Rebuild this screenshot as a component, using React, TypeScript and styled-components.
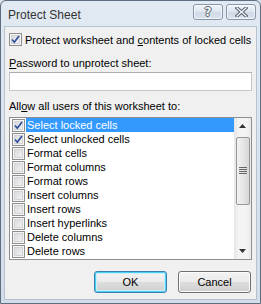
import styled, { createGlobalStyle } from "styled-components";

const GlobalStyle = createGlobalStyle`
  html, body {
    margin: 0;
    padding: 0;
    background: #d9e3ed;
  }
  body {
    font-family: "Liberation Sans", Arial, sans-serif;
    font-size: 11px;
    color: #000;
  }
`;

const Window = styled.div`
  width: 261px;
  height: 304px;
  box-sizing: border-box;
  border: 1px solid #5d6e80;
  border-radius: 6px 6px 0 0;
  background: linear-gradient(#e1e9f2, #d2dde9);
  display: flex;
  flex-direction: column;
  padding: 0 3px 3px 3px;
`;

const TitleBar = styled.div`
  height: 25px;
  display: flex;
  align-items: flex-start;
  justify-content: space-between;
`;

const Title = styled.div`
  margin: 7px 0 0 4px;
  font-size: 12px;
  color: #333;
`;

const TitleButtons = styled.div`
  display: flex;
  gap: 3px;
  margin: 3px 1px 0 0;
`;

const TitleButton = styled.div`
  width: 28px;
  height: 14px;
  border: 1px solid #8797aa;
  border-radius: 3px;
  background: linear-gradient(#f2f5f9, #dde5ee 50%, #d0dae5 51%, #dbe3ec);
  box-shadow: inset 0 0 0 1px rgba(255, 255, 255, 0.6);
  display: flex;
  align-items: center;
  justify-content: center;
`;

const HelpGlyph = styled.span`
  font-family: "DejaVu Sans", sans-serif;
  font-weight: bold;
  font-size: 12px;
  line-height: 14px;
  color: #f4f6f8;
  text-shadow: -1px 0 #55606c, 1px 0 #55606c, 0 -1px #55606c, 0 1px #55606c;
`;

const Client = styled.div`
  flex: 1;
  border: 1px solid #b4c2d1;
  background: #f0f0f0;
  padding: 0 4px;
  display: flex;
  flex-direction: column;
`;

const TopCheckRow = styled.div`
  display: flex;
  align-items: center;
  height: 13px;
  margin-top: 6px;
  gap: 3px;
  white-space: nowrap;
`;

const Label = styled.div<{ $top: number }>`
  margin-top: ${p => p.$top}px;
  line-height: 13px;
  height: 13px;
  white-space: nowrap;
`;

const U = styled.span`
  text-decoration: underline;
  text-underline-offset: 1px;
`;

const TextBox = styled.div`
  margin-top: 2px;
  height: 19px;
  box-sizing: border-box;
  border: 1px solid #c3c6cc;
  border-top-color: #abadb3;
  background: #fff;
`;

const ListBox = styled.div`
  margin-top: 4px;
  height: 143px;
  box-sizing: border-box;
  border: 1px solid #8c8f94;
  background: #fff;
  display: flex;
`;

const Rows = styled.div`
  flex: 1;
  padding-left: 2px;
  display: flex;
  flex-direction: column;
`;

const Row = styled.div`
  height: 14px;
  display: flex;
  align-items: center;
  white-space: nowrap;
`;

const RowText = styled.div<{ $selected?: boolean }>`
  flex: 1;
  height: 14px;
  line-height: 14px;
  margin-left: 1px;
  padding-left: 1px;
  background: ${p => (p.$selected ? "#3399ff" : "transparent")};
  color: ${p => (p.$selected ? "#fff" : "#000")};
`;

const Box = styled.span`
  width: 13px;
  height: 13px;
  box-sizing: border-box;
  flex: none;
  border: 1px solid #8e8f8f;
  background: linear-gradient(135deg, #d3d5d8, #f7f7f7);
  box-shadow: inset 0 0 0 1px #f4f4f4, inset 0 0 0 2px #d2d3d6;
  display: flex;
  align-items: center;
  justify-content: center;
`;

const ScrollBar = styled.div`
  width: 17px;
  background: linear-gradient(90deg, #e6e6e6, #f4f4f4 30%, #f4f4f4 70%, #e9e9e9);
  display: flex;
  flex-direction: column;
  align-items: center;
`;

const Arrow = styled.div`
  height: 16px;
  width: 17px;
  display: flex;
  align-items: center;
  justify-content: center;
`;

const Thumb = styled.div`
  margin-top: 3px;
  width: 14px;
  height: 68px;
  box-sizing: border-box;
  border: 1px solid #979797;
  border-radius: 2px;
  background: linear-gradient(90deg, #f2f2f2, #e6e6e6 50%, #d6d6d6);
  display: flex;
  align-items: center;
  justify-content: center;
`;

const Spacer = styled.div`
  flex: 1;
`;

const ButtonRow = styled.div`
  margin-top: 11px;
  display: flex;
  justify-content: flex-end;
  gap: 11px;
  padding-right: 1px;
`;

const Button = styled.div<{ $default?: boolean }>`
  width: 73px;
  height: 22px;
  box-sizing: border-box;
  border: 1px solid ${p => (p.$default ? "#3c7fb1" : "#707070")};
  border-radius: 3px;
  background: linear-gradient(#f2f2f2, #ebebeb 50%, #dddddd 51%, #cfcfcf);
  box-shadow: ${p =>
    p.$default
      ? "inset 0 0 0 1px #48d1f5, inset 0 0 0 2px #cbeffa"
      : "inset 0 0 0 1px #fcfcfc"};
  display: flex;
  align-items: center;
  justify-content: center;
  font-size: 11px;
`;

function Check({ checked }: { checked?: boolean }) {
  return (
    <Box>
      {checked && (
        <svg width="9" height="9" viewBox="0 0 9 9">
          <path d="M1 4.5 L3.3 7.2 L8 1" fill="none" stroke="#2f4f9c" strokeWidth="1.7" />
        </svg>
      )}
    </Box>
  );
}

const items = [
  { label: "Select locked cells", checked: true, selected: true },
  { label: "Select unlocked cells", checked: true },
  { label: "Format cells" },
  { label: "Format columns" },
  { label: "Format rows" },
  { label: "Insert columns" },
  { label: "Insert rows" },
  { label: "Insert hyperlinks" },
  { label: "Delete columns" },
  { label: "Delete rows" },
];

export default function App() {
  return (
    <>
      <GlobalStyle />
      <Window>
        <TitleBar>
          <Title>Protect Sheet</Title>
          <TitleButtons>
            <TitleButton>
              <HelpGlyph>?</HelpGlyph>
            </TitleButton>
            <TitleButton>
              <svg width="13" height="10" viewBox="0 0 13 10">
                <path d="M2 1 L11 9 M11 1 L2 9" stroke="#55606c" strokeWidth="3.4" strokeLinecap="square" />
                <path d="M2 1 L11 9 M11 1 L2 9" stroke="#f4f6f8" strokeWidth="1.4" strokeLinecap="square" />
              </svg>
            </TitleButton>
          </TitleButtons>
        </TitleBar>
        <Client>
          <TopCheckRow>
            <Check checked />
            <span>
              Protect worksheet and <U>c</U>ontents of locked cells
            </span>
          </TopCheckRow>
          <Label $top={11}>
            <U>P</U>assword to unprotect sheet:
          </Label>
          <TextBox />
          <Label $top={9}>
            All<U>o</U>w all users of this worksheet to:
          </Label>
          <ListBox>
            <Rows>
              {items.map(it => (
                <Row key={it.label}>
                  <Check checked={it.checked} />
                  <RowText $selected={it.selected}>{it.label}</RowText>
                </Row>
              ))}
            </Rows>
            <ScrollBar>
              <Arrow>
                <svg width="7" height="4" viewBox="0 0 7 4">
                  <path d="M0 4 L3.5 0 L7 4 Z" fill="#333" />
                </svg>
              </Arrow>
              <Thumb>
                <svg width="8" height="8" viewBox="0 0 8 8">
                  <path d="M0 0.5 H8 M0 2.5 H8 M0 4.5 H8 M0 6.5 H8" stroke="#666" strokeWidth="1" />
                </svg>
              </Thumb>
              <Spacer />
              <Arrow>
                <svg width="7" height="4" viewBox="0 0 7 4">
                  <path d="M0 0 L7 0 L3.5 4 Z" fill="#333" />
                </svg>
              </Arrow>
            </ScrollBar>
          </ListBox>
          <ButtonRow>
            <Button $default>OK</Button>
            <Button>Cancel</Button>
          </ButtonRow>
        </Client>
      </Window>
    </>
  );
}
